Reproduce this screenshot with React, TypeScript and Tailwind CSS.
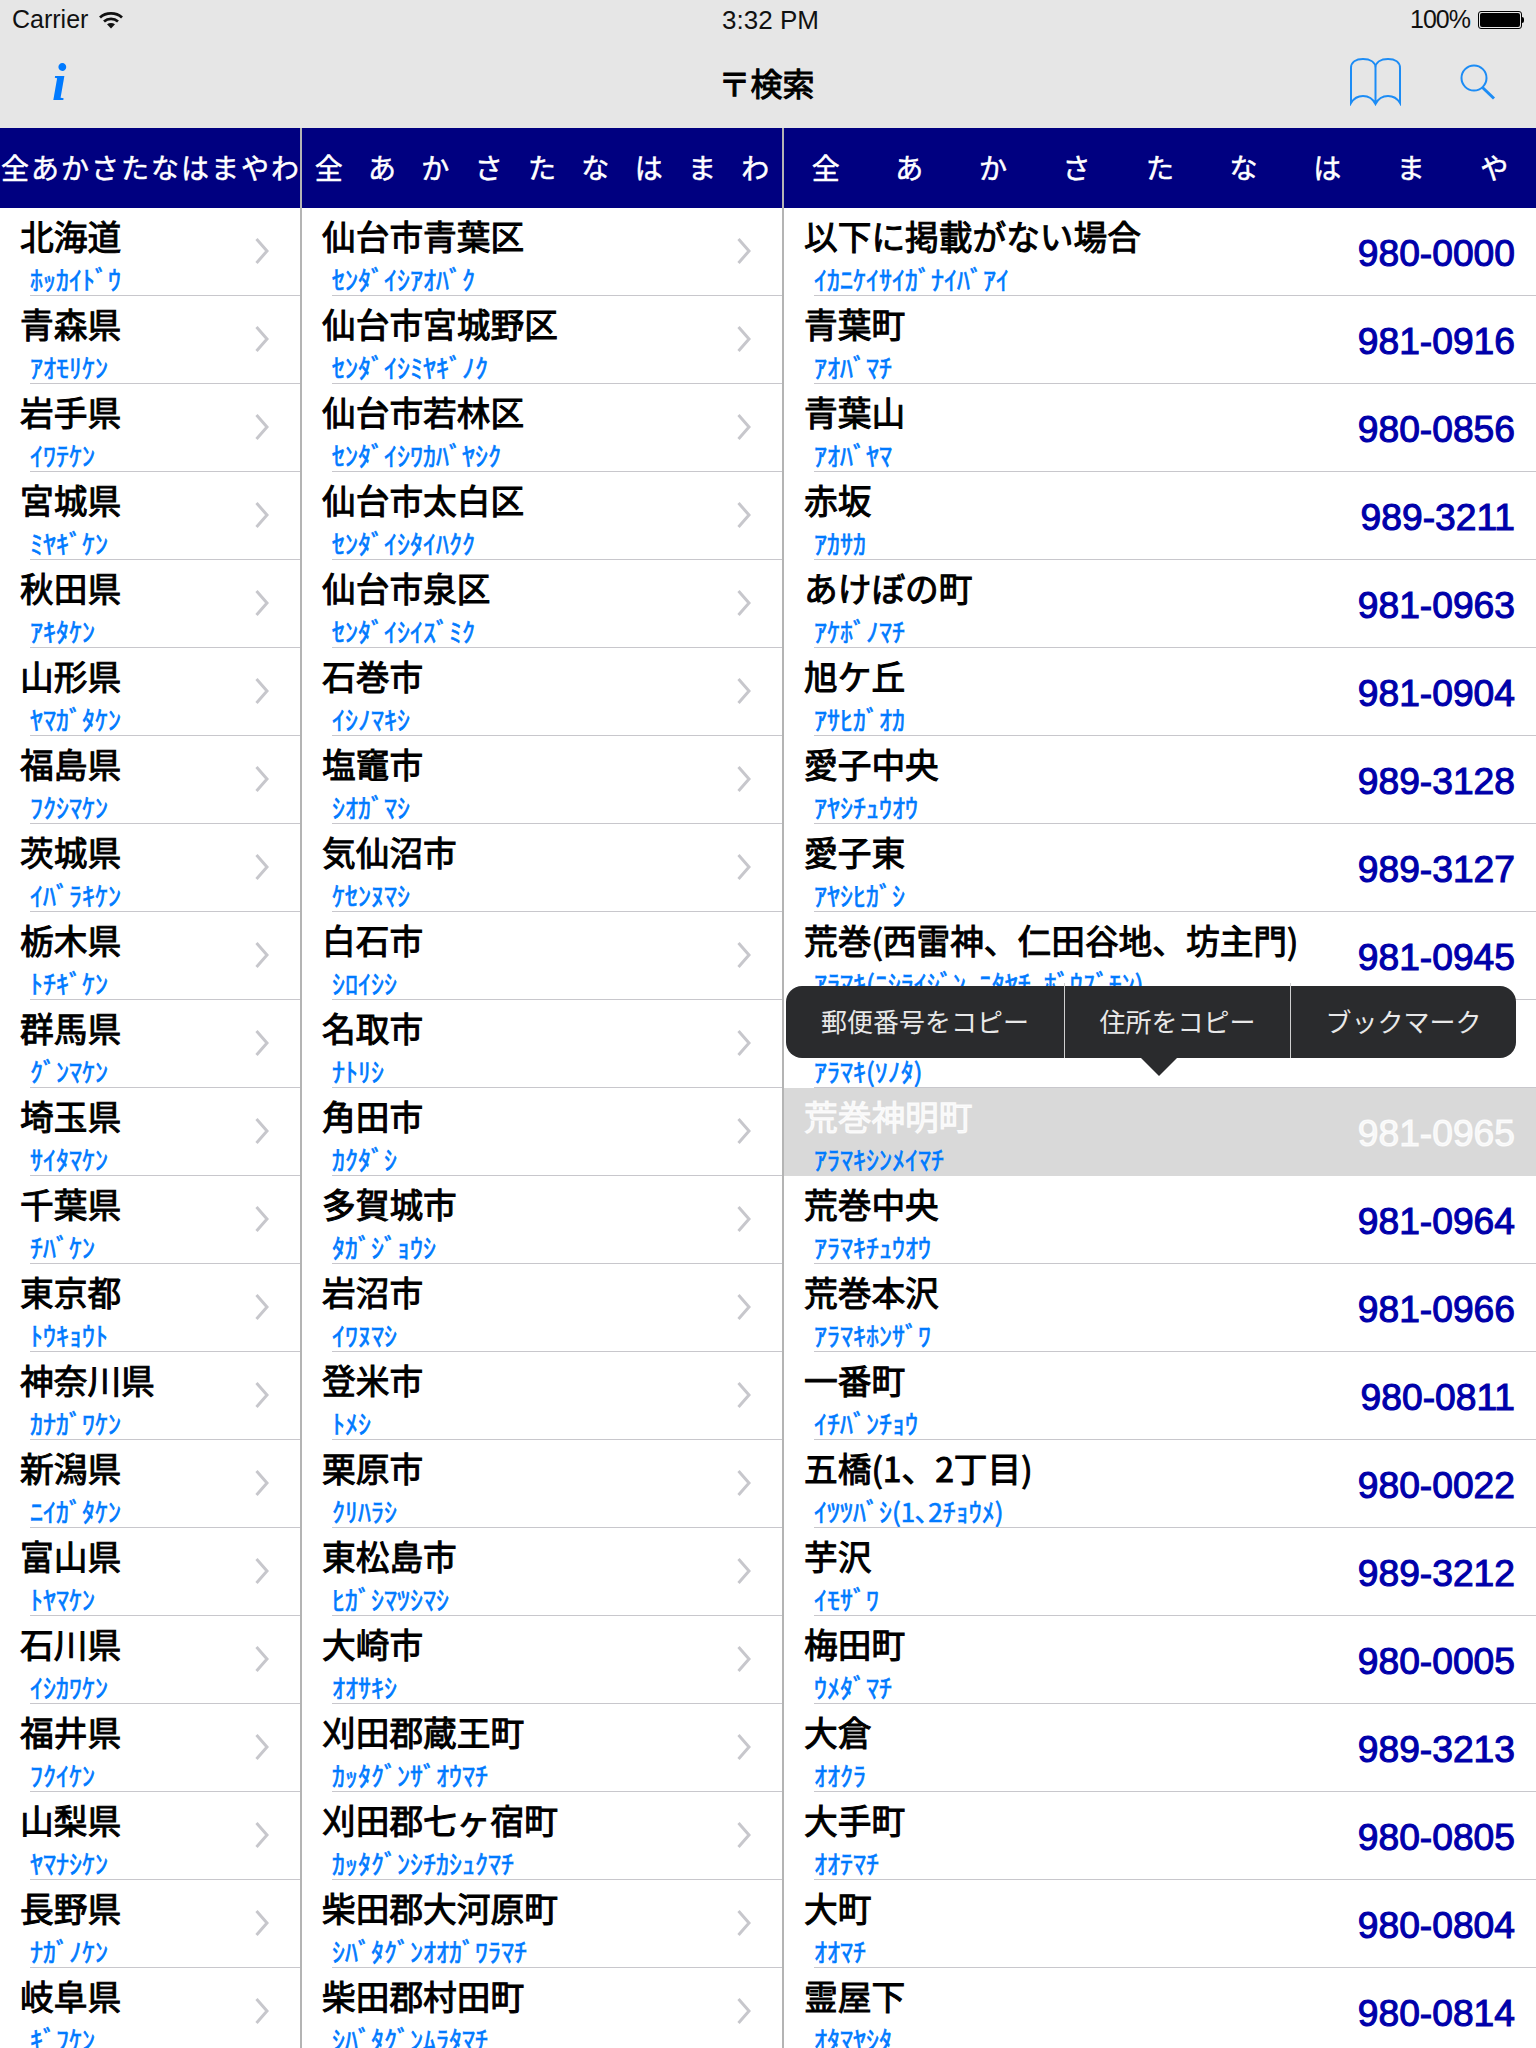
const prefectures = [
  ["北海道", "ﾎｯｶｲﾄﾞｳ"], ["青森県", "ｱｵﾓﾘｹﾝ"], ["岩手県", "ｲﾜﾃｹﾝ"], ["宮城県", "ﾐﾔｷﾞｹﾝ"],
  ["秋田県", "ｱｷﾀｹﾝ"], ["山形県", "ﾔﾏｶﾞﾀｹﾝ"], ["福島県", "ﾌｸｼﾏｹﾝ"], ["茨城県", "ｲﾊﾞﾗｷｹﾝ"],
  ["栃木県", "ﾄﾁｷﾞｹﾝ"], ["群馬県", "ｸﾞﾝﾏｹﾝ"], ["埼玉県", "ｻｲﾀﾏｹﾝ"], ["千葉県", "ﾁﾊﾞｹﾝ"],
  ["東京都", "ﾄｳｷｮｳﾄ"], ["神奈川県", "ｶﾅｶﾞﾜｹﾝ"], ["新潟県", "ﾆｲｶﾞﾀｹﾝ"], ["富山県", "ﾄﾔﾏｹﾝ"],
  ["石川県", "ｲｼｶﾜｹﾝ"], ["福井県", "ﾌｸｲｹﾝ"], ["山梨県", "ﾔﾏﾅｼｹﾝ"], ["長野県", "ﾅｶﾞﾉｹﾝ"],
  ["岐阜県", "ｷﾞﾌｹﾝ"],
];

const cities = [
  ["仙台市青葉区", "ｾﾝﾀﾞｲｼｱｵﾊﾞｸ"], ["仙台市宮城野区", "ｾﾝﾀﾞｲｼﾐﾔｷﾞﾉｸ"], ["仙台市若林区", "ｾﾝﾀﾞｲｼﾜｶﾊﾞﾔｼｸ"],
  ["仙台市太白区", "ｾﾝﾀﾞｲｼﾀｲﾊｸｸ"], ["仙台市泉区", "ｾﾝﾀﾞｲｼｲｽﾞﾐｸ"], ["石巻市", "ｲｼﾉﾏｷｼ"],
  ["塩竈市", "ｼｵｶﾞﾏｼ"], ["気仙沼市", "ｹｾﾝﾇﾏｼ"], ["白石市", "ｼﾛｲｼｼ"], ["名取市", "ﾅﾄﾘｼ"],
  ["角田市", "ｶｸﾀﾞｼ"], ["多賀城市", "ﾀｶﾞｼﾞｮｳｼ"], ["岩沼市", "ｲﾜﾇﾏｼ"], ["登米市", "ﾄﾒｼ"],
  ["栗原市", "ｸﾘﾊﾗｼ"], ["東松島市", "ﾋｶﾞｼﾏﾂｼﾏｼ"], ["大崎市", "ｵｵｻｷｼ"], ["刈田郡蔵王町", "ｶｯﾀｸﾞﾝｻﾞｵｳﾏﾁ"],
  ["刈田郡七ヶ宿町", "ｶｯﾀｸﾞﾝｼﾁｶｼｭｸﾏﾁ"], ["柴田郡大河原町", "ｼﾊﾞﾀｸﾞﾝｵｵｶﾞﾜﾗﾏﾁ"], ["柴田郡村田町", "ｼﾊﾞﾀｸﾞﾝﾑﾗﾀﾏﾁ"],
];

// the row under the copy menu keeps an empty postal code, the menu covers it
const towns = [
  ["以下に掲載がない場合", "ｲｶﾆｹｲｻｲｶﾞﾅｲﾊﾞｱｲ", "980-0000"], ["青葉町", "ｱｵﾊﾞﾏﾁ", "981-0916"],
  ["青葉山", "ｱｵﾊﾞﾔﾏ", "980-0856"], ["赤坂", "ｱｶｻｶ", "989-3211"], ["あけぼの町", "ｱｹﾎﾞﾉﾏﾁ", "981-0963"],
  ["旭ケ丘", "ｱｻﾋｶﾞｵｶ", "981-0904"], ["愛子中央", "ｱﾔｼﾁｭｳｵｳ", "989-3128"], ["愛子東", "ｱﾔｼﾋｶﾞｼ", "989-3127"],
  ["荒巻(西雷神、仁田谷地、坊主門)", "ｱﾗﾏｷ(ﾆｼﾗｲｼﾞﾝ､ﾆﾀﾔﾁ､ﾎﾞｳｽﾞﾓﾝ)", "981-0945"],
  ["荒巻(その他)", "ｱﾗﾏｷ(ｿﾉﾀ)", ""], ["荒巻神明町", "ｱﾗﾏｷｼﾝﾒｲﾏﾁ", "981-0965"],
  ["荒巻中央", "ｱﾗﾏｷﾁｭｳｵｳ", "981-0964"], ["荒巻本沢", "ｱﾗﾏｷﾎﾝｻﾞﾜ", "981-0966"], ["一番町", "ｲﾁﾊﾞﾝﾁｮｳ", "980-0811"],
  ["五橋(1、2丁目)", "ｲﾂﾂﾊﾞｼ(1､2ﾁｮｳﾒ)", "980-0022"], ["芋沢", "ｲﾓｻﾞﾜ", "989-3212"], ["梅田町", "ｳﾒﾀﾞﾏﾁ", "980-0005"],
  ["大倉", "ｵｵｸﾗ", "989-3213"], ["大手町", "ｵｵﾃﾏﾁ", "980-0805"], ["大町", "ｵｵﾏﾁ", "980-0804"],
  ["霊屋下", "ｵﾀﾏﾔｼﾀ", "980-0814"],
];

const SELECTED = 10;

function IndexBar({ chars }: { chars: string }) {
  return (
    <div className="flex h-20 items-center bg-[#000080] pb-[2px]">
      {chars.split("").map((c) => (
        <span key={c} className="flex-1 text-center text-[28px] text-white [-webkit-text-stroke:0.5px]">{c}</span>
      ))}
    </div>
  );
}

function Row({ title, kana, postal, selected }: { title: string; kana: string; postal?: string; selected?: boolean }) {
  return (
    <div className={`relative h-[88px] pl-[20px] ${selected ? "bg-[#d9d9d9]" : ""}`}>
      <div className={`pt-[3px] text-[33.7px] leading-[50px] whitespace-nowrap [-webkit-text-stroke:1px] ${selected ? "text-white/80" : "text-black"}`}>
        {title}
      </div>
      <div className="pl-[10px] pt-[3px] text-[26px] leading-[30px] whitespace-nowrap text-[#007aff] [-webkit-text-stroke:0.6px]">{kana}</div>
      {postal !== undefined ? (
        <div className={`absolute right-[21px] top-0 flex h-full items-center pt-[3px] font-['Liberation_Sans',sans-serif] text-[37.2px] [-webkit-text-stroke:1.1px] ${selected ? "text-white/80" : "text-[#0000aa]"}`}>
          {postal}
        </div>
      ) : (
        <svg className="absolute right-[31px] top-[30px]" width="14" height="26" viewBox="0 0 14 26" fill="none" stroke="#c7c7cc" strokeWidth="3">
          <path d="M1.500 1L12 13L1.500 25" />
        </svg>
      )}
      {!selected && <div className="absolute bottom-0 left-[30px] right-0 h-[1px] bg-[#c8c7cc]" />}
    </div>
  );
}

export default function App() {
  return (
    <div className="relative h-[2048px] w-[1536px] overflow-hidden bg-white font-['Noto_Sans_CJK_JP',sans-serif]">
      {/* status bar + nav */}
      <div className="h-32 bg-[#e6e6e6]">
        <div className="grid h-10 grid-cols-3 items-center font-['Liberation_Sans',sans-serif] text-[25px] text-[#111]">
          <div className="flex items-center gap-[10px] pl-3">
            <span>Carrier</span>
            <svg width="26" height="18" viewBox="0 0 26 18" fill="none" stroke="#111" strokeWidth="2.8">
              <path d="M2 6.500C8 1 18 1 24 6.500" />
              <path d="M6 10.500C10 7 16 7 20 10.500" />
              <path d="M13 17.500L9 13.200C11.500 11.500 14.500 11.500 17 13.200Z" fill="#111" stroke="none" />
            </svg>
          </div>
          <div className="pl-[5px] text-center text-[26px]">3:32 PM</div>
          <div className="flex items-center justify-end gap-2 pr-3">
            <span className="tracking-[-1px]">100%</span>
            <div className="flex items-center">
              <div className="h-[18px] w-[44px] rounded-[3px] border border-black p-[1px]">
                <div className="h-full w-full rounded-[2px] bg-black" />
              </div>
              <div className="h-[6px] w-[2px] rounded-r bg-black" />
            </div>
          </div>
        </div>
        <div className="relative flex h-[88px] items-center justify-center">
          <span className="absolute left-[52px] top-[13px] font-['Liberation_Serif',serif] text-[52px] leading-[60px] font-bold text-[#007aff] italic">i</span>
          <span className="pr-[3px] pb-[4px] text-[32px] text-black [-webkit-text-stroke:1px]">〒検索</span>
          <svg className="absolute left-[1350px] top-[18px]" width="51" height="48" viewBox="0 0 51 48" fill="none" stroke="#1c8cf5" strokeWidth="2">
            <path d="M25.500 10C25.500 4 20 1 13 1C6 1 1 4 1 10V45C4 40 8 38 13 38C19 38 23 41 25.500 46C28 41 32 38 38 38C43 38 47 40 50 45V10C50 4 45 1 38 1C31 1 25.500 4 25.500 10V46" />
          </svg>
          <svg className="absolute left-[1460px] top-[24px]" width="36" height="36" viewBox="0 0 36 36" fill="none" stroke="#1c8cf5">
            <circle cx="14" cy="14" r="12.500" strokeWidth="2" />
            <path d="M22.500 23.500L34 34.500" strokeWidth="3" />
          </svg>
        </div>
      </div>

      {/* three lists */}
      <div className="flex">
        <div className="w-[300px] shrink-0">
          <IndexBar chars="全あかさたなはまやわ" />
          {prefectures.map(([t, k]) => <Row key={t} title={t} kana={k} />)}
        </div>
        <div className="h-[1920px] w-[2px] shrink-0 bg-[#b4b4b4]" />
        <div className="w-[480px] shrink-0">
          <IndexBar chars="全あかさたなはまわ" />
          {cities.map(([t, k]) => <Row key={t} title={t} kana={k} />)}
        </div>
        <div className="h-[1920px] w-[2px] shrink-0 bg-[#b4b4b4]" />
        <div className="min-w-0 flex-1">
          <IndexBar chars="全あかさたなはまや" />
          {towns.map(([t, k, p], i) => <Row key={t} title={t} kana={k} postal={p} selected={i === SELECTED} />)}
        </div>
      </div>

      {/* copy menu */}
      <div className="absolute left-[786px] top-[986px] flex h-[72px] w-[730px] rounded-[16px] bg-[#2a2b2d] pb-[3px] text-[26px] text-[#e8e8e8]">
        <div className="flex w-[278px] items-center justify-center">郵便番号をコピー</div>
        <div className="my-[-3px] mb-[-3px] w-[1px] bg-[#d0d0d0]" />
        <div className="flex w-[225px] items-center justify-center">住所をコピー</div>
        <div className="my-[-3px] mb-[-3px] w-[1px] bg-[#d0d0d0]" />
        <div className="flex flex-1 items-center justify-center">ブックマーク</div>
        <div className="absolute left-[355px] top-[72px] h-0 w-0 border-x-[18px] border-t-[18px] border-x-transparent border-t-[#2a2b2d]" />
      </div>
    </div>
  );
}
